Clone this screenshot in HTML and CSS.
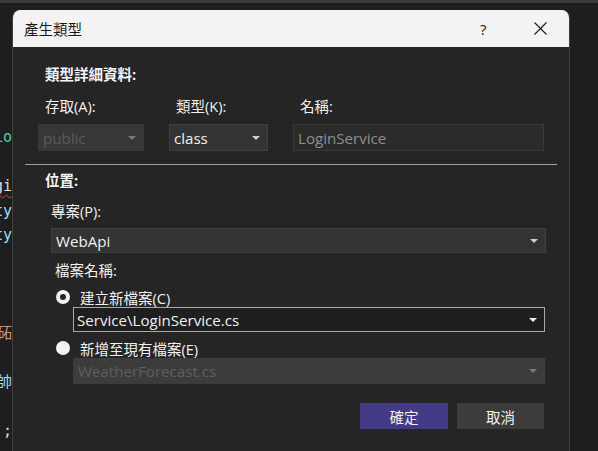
FILE: index.html
```html
<!DOCTYPE html>
<html lang="zh-Hant">
<head>
<meta charset="utf-8">
<title>產生類型</title>
<link rel="stylesheet" href="styles.css">
</head>
<body>
<div class="topstrip"></div>
<div class="editor">
  <div class="code">
    <div class="ln"><span class="c-teal">Lo</span></div>
    <div class="ln"></div>
    <div class="ln"><span class="c-white squig">gi</span></div>
    <div class="ln"><span class="c-blue">ty</span></div>
    <div class="ln"><span class="c-blue">ty</span></div>
    <div class="ln"></div>
    <div class="ln"></div>
    <div class="ln"></div>
    <div class="ln"><span class="c-orange">砳</span></div>
    <div class="ln"></div>
    <div class="ln"><span class="c-orange">很</span><span class="c-blue">帥</span></div>
    <div class="ln"></div>
    <div class="ln"><span class="c-orange">'</span><span class="c-white">;</span></div>
  </div>
</div>

<div class="dialog">
  <div class="titlebar">
    <span class="title">產生類型</span>
    <span class="help">?</span>
    <span class="close">
      <svg width="13" height="13" viewBox="0 0 13 13"><path d="M0.5 0.5 L12.5 12.5 M12.5 0.5 L0.5 12.5" stroke="#1a1a1a" stroke-width="1.1" fill="none"/></svg>
    </span>
  </div>
  <div class="body">
    <div class="heading h-details">類型詳細資料:</div>
    <div class="details">
      <div class="field">
        <div class="label">存取(A):</div>
        <div class="combo combo-disabled"><span>public</span><i class="arrow arrow-dim"></i></div>
      </div>
      <div class="field">
        <div class="label">類型(K):</div>
        <div class="combo"><span>class</span><i class="arrow"></i></div>
      </div>
      <div class="field">
        <div class="label">名稱:</div>
        <div class="textbox textbox-name"><span>LoginService</span></div>
      </div>
    </div>
    <div class="separator"></div>
    <div class="heading h-location">位置:</div>
    <div class="label l-project">專案(P):</div>
    <div class="combo combo-project"><span>WebApi</span><i class="arrow"></i></div>
    <div class="label l-file">檔案名稱:</div>
    <div class="radio-row r-new"><i class="radio radio-on"></i><span>建立新檔案(C)</span></div>
    <div class="combo combo-file"><span>Service\LoginService.cs</span><i class="arrow arrow-white"></i></div>
    <div class="radio-row r-existing"><i class="radio radio-off"></i><span>新增至現有檔案(E)</span></div>
    <div class="combo combo-existing"><span>WeatherForecast.cs</span><i class="arrow arrow-dim"></i></div>
    <div class="buttons">
      <button class="btn btn-ok">確定</button>
      <button class="btn btn-cancel">取消</button>
    </div>
  </div>
  <i class="grip"></i>
</div>
</body>
</html>
```
FILE: styles.css
```css
html, body {
  margin: 0;
  padding: 0;
  width: 598px;
  height: 451px;
  overflow: hidden;
  background: #1e1e1e;
  font-family: "Open Sans", "Noto Sans CJK TC", sans-serif;
  font-size: 14.5px;
  color: #f1f1f1;
}

.topstrip {
  height: 3px;
  background: #3b3b3b;
}

.editor {
  height: 448px;
  background: #1e1e1e;
}

.code {
  width: 12px;
  overflow: hidden;
  padding-top: 122px;
  font-family: "DejaVu Sans Mono", "Noto Sans CJK TC", monospace;
  font-size: 15px;
}

.ln {
  height: 24.5px;
  line-height: 24.5px;
  display: flex;
  justify-content: flex-end;
  white-space: pre;
}

.c-teal { color: #4ec9b0; }
.c-white { color: #dcdcdc; }
.c-blue { color: #9cdcfe; }
.c-orange { color: #ce9178; }
.squig {
  text-decoration: underline wavy #e0413a;
  text-decoration-thickness: 1px;
  text-underline-offset: 3px;
}

.dialog {
  position: absolute;
  left: 12px;
  top: 10px;
  width: 556px;
  height: 445px;
  background: #252525;
  border-left: 1px solid #3e3e3e;
  border-right: 1px solid #3e3e3e;
  border-radius: 8px 8px 0 0;
  overflow: hidden;
}

.titlebar {
  height: 37px;
  background: #f3f3f3;
  display: flex;
  align-items: center;
  color: #1a1a1a;
}

.title {
  margin-left: 11px;
  font-size: 14.5px;
  flex: 1;
}

.help {
  font-size: 15px;
  width: 8px;
  margin-right: 46px;
}

.close {
  display: flex;
  margin-right: 22px;
}

.body {
  display: flex;
  flex-direction: column;
  align-items: flex-start;
}

.heading {
  font-weight: bold;
  line-height: 20px;
  height: 20px;
  color: #f5f5f5;
}

.h-details { margin: 18px 0 0 32px; }

.label {
  line-height: 20px;
  height: 20px;
  white-space: nowrap;
}

.details {
  display: flex;
  gap: 25px;
  margin: 12px 0 0 25px;
}

.field {
  display: flex;
  flex-direction: column;
  gap: 7px;
}

.field .label { padding-left: 7px; }

.field:nth-child(1) { width: 106px; }
.field:nth-child(2) { width: 99px; }
.field:nth-child(3) { width: 251px; }

.combo, .textbox {
  box-sizing: border-box;
  height: 27px;
  display: flex;
  align-items: center;
  padding-left: 4px;
  background: #333333;
  border: 1px solid #3f3f3f;
  white-space: nowrap;
  font-size: 15.1px;
}

.combo span, .textbox span { flex: 1; }

.combo-disabled {
  background: #373737;
  border-color: #373737;
  color: #5a5a5a;
}

.textbox-name {
  background: #2b2b2b;
  border-color: #383838;
  color: #8e8e8e;
}

.arrow {
  width: 0;
  height: 0;
  border-left: 4px solid transparent;
  border-right: 4px solid transparent;
  border-top: 4px solid #cccccc;
  margin-right: 7px;
}

.arrow-dim { border-top-color: #7a7a7a; }
.arrow-white { border-top-color: #f0f0f0; }

.separator {
  width: 532px;
  height: 1px;
  background: #9e9e9e;
  margin: 13px 0 0 12px;
}

.h-location { margin: 6px 0 0 32px; }

.l-project { margin: 11px 0 0 38px; }

.combo-project {
  width: 495px;
  height: 25px;
  margin: 6px 0 0 38px;
}

.l-file { margin: 8px 0 0 42px; }

.radio-row {
  display: flex;
  align-items: center;
  height: 20px;
  gap: 10px;
  margin-left: 43px;
}

.r-new { margin-top: 6px; }
.r-existing { margin-top: 6px; }

.radio {
  box-sizing: border-box;
  width: 14px;
  height: 14px;
  border-radius: 50%;
}

.radio-on {
  border: 4px solid #f4f4f4;
  background: #252525;
}

.radio-off {
  background: #f4f4f4;
}

.combo-file {
  width: 472px;
  height: 25px;
  margin-left: 60px;
  background: #1f1f1f;
  border-color: #a9a9a9;
  padding-left: 3px;
}

.combo-existing {
  width: 472px;
  height: 26px;
  margin-left: 60px;
  background: #3c3c3c;
  border-color: #3c3c3c;
  color: #5e5e5e;
}

.buttons {
  display: flex;
  gap: 9px;
  margin: 19px 0 0 347px;
}

.btn {
  height: 26px;
  border: none;
  font-family: "Noto Sans CJK TC", sans-serif;
  font-size: 14.5px;
  color: #f1f1f1;
  padding: 0;
}

.btn-ok { width: 88px; background: #433a86; }
.btn-cancel { width: 87px; background: #3c3c3c; }

.grip {
  position: absolute;
  right: 2px;
  bottom: 1px;
  width: 3px;
  height: 3px;
  background: #bcbcbc;
}
```
